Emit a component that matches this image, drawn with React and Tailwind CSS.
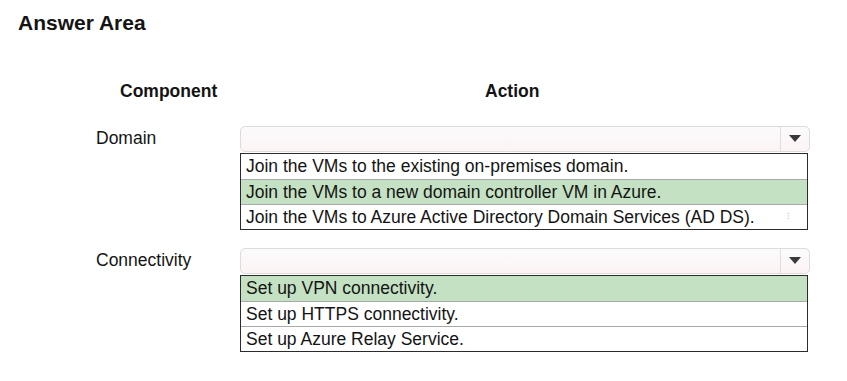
import React from "react";

const rows = [
  {
    label: "Domain",
    options: [
      { text: "Join the VMs to the existing on-premises domain." },
      { text: "Join the VMs to a new domain controller VM in Azure.", picked: true },
      { text: "Join the VMs to Azure Active Directory Domain Services (AD DS).", mark: true },
    ],
  },
  {
    label: "Connectivity",
    options: [
      { text: "Set up VPN connectivity.", picked: true },
      { text: "Set up HTTPS connectivity." },
      { text: "Set up Azure Relay Service." },
    ],
  },
];

const SelectBox = () => (
  <div className="flex h-[26px] w-[570px] rounded-[5px] border border-[#dcdcdc] bg-gradient-to-b from-[#fbfbfb] to-[#fdf3f5]">
    <div className="flex-1" />
    <div className="flex w-[29px] items-center justify-center border-l border-[#dedede]">
      <svg width="12" height="8" viewBox="0 0 12 8">
        <path d="M0 0 L12 0 L6 7 Z" fill="#3a3a3a" />
      </svg>
    </div>
  </div>
);

const OptionList = ({ options }) => (
  <div className="mt-[1px] w-[568px] border border-[#2b2b2b]">
    {options.map((opt, i) => (
      <div
        key={opt.text}
        className={`flex h-[25px] items-center justify-between pl-[5px] pr-[18px] text-[17.5px] ${
          i > 0 ? "border-t border-[#a9a9a9]" : ""
        } ${opt.picked ? "bg-[#c4e2c3]" : "bg-white"}`}
      >
        <span>{opt.text}</span>
        {opt.mark && <span className="text-[9px] text-[#b8b8b8]">⁝</span>}
      </div>
    ))}
  </div>
);

const App = () => {
  return (
    <div className="h-[381px] w-[847px] overflow-hidden bg-white font-['Liberation_Sans',Arial,sans-serif] text-[#141414]">
      <h1 className="pl-[18px] pt-[10px] text-[21px] font-bold leading-[25px]">
        Answer Area
      </h1>
      <div className="mt-[45px] grid grid-cols-[240px_570px] text-[17.5px] leading-[22px]">
        <div className="pl-[120px] font-bold">Component</div>
        <div className="pl-[245px] font-bold">Action</div>
      </div>
      <div className="mt-[24px] flex flex-col gap-[18px]">
        {rows.map((row) => (
          <div key={row.label} className="grid grid-cols-[240px_570px]">
            <div className="pl-[96px] pt-[1px] text-[17.5px] leading-[22px]">{row.label}</div>
            <div>
              <SelectBox />
              <OptionList options={row.options} />
            </div>
          </div>
        ))}
      </div>
    </div>
  );
};

export default App;
